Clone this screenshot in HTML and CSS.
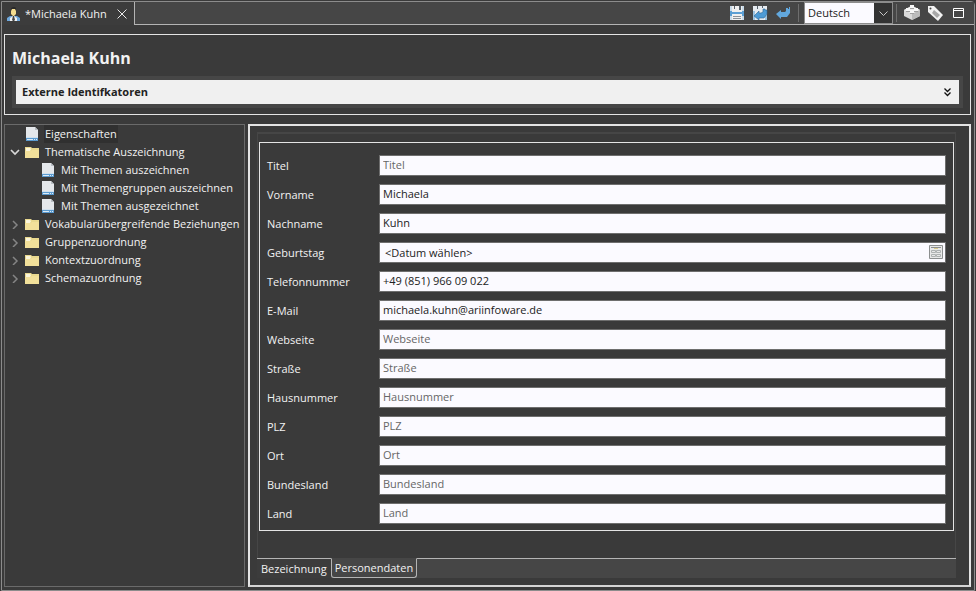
FILE: index.html
```html
<!DOCTYPE html>
<html lang="de">
<head>
    <meta charset="utf-8">
    <title>Michaela Kuhn</title>
    <link rel="stylesheet" href="styles.css">
</head>
<body>
    <!-- shared icons -->
    <svg class="sprite" aria-hidden="true">
        <symbol id="page" viewBox="0 0 14 16">
            <path d="M1 1h9l3 3v11H1z" fill="#e4e7ea"/>
            <path d="M10 1l3 3h-3z" fill="#b9bec3"/>
            <path d="M1 11h12v4H1z" fill="#5b9bd0"/>
            <path d="M1 11h12v1H1z" fill="#cfe0ee"/>
            <path d="M2 13h6v1H2zM9 13h1v1H9zM11 13h1v1h-1z" fill="#dcebf7"/>
        </symbol>
        <symbol id="folder" viewBox="0 0 14 12">
            <path d="M0 1h6l1 1h7v10H0z" fill="#e9d98f"/>
            <path d="M1 2h4l1 1-1 2H1z" fill="#fbf6dc"/>
            <path d="M7 4h7v8H0V5h6z" fill="#f2e09a"/>
        </symbol>
        <symbol id="open" viewBox="0 0 10 10">
            <path d="M1 3l4 4 4-4" fill="none" stroke="#d8d8d8" stroke-width="1.7"/>
        </symbol>
        <symbol id="closed" viewBox="0 0 10 10">
            <path d="M3 2l4 4-4 4" fill="none" stroke="#858585" stroke-width="1.5"/>
        </symbol>
    </svg>

    <div class="window">
        <header class="topbar">
            <div class="editor-tab">
                <svg class="person" viewBox="0 0 13 14" width="13" height="14">
                    <path d="M0 14v-3l3-2h7l3 2v3z" fill="#6fa8dc"/>
                    <path d="M3 11l3-2h1l3 2v3H3z" fill="#f3f3f3"/>
                    <path d="M6 9h1l1 4-1 1H6l-1-1z" fill="#444"/>
                    <path d="M4 2h5v5L7 9H6L4 7z" fill="#f4dc8f"/>
                    <path d="M4 4V1l2-1h2l1 1v3L8 2H5z" fill="#2a2a2a"/>
                </svg>
                <span>*Michaela Kuhn</span>
                <button class="close" aria-label="Schließen">
                    <svg viewBox="0 0 10 10" width="10" height="10"><path d="M.5.5l9 9M9.5.5l-9 9" stroke="#e8e8e8" fill="none"/></svg>
                </button>
            </div>
            <div class="toolbar">
                <button class="tool" aria-label="Speichern">
                    <svg viewBox="0 0 16 16" width="16" height="16">
                        <path d="M1 1h14v14H1z" fill="#5b9fd4"/>
                        <path d="M3 1h10v6H3zM3 9h10v6H3z" fill="#f0f0f0"/>
                        <path d="M5 1h1v3H5zM10 1h2v4h-2z" fill="#55606a"/>
                        <path d="M4 11h8v1H4zM4 13h8v1H4z" fill="#8b9299"/>
                        <path d="M1 1h2v5H1zM13 1h2v5h-2zM1 11h2v4H1zM13 11h2v4h-2z" fill="#c9dbe9"/>
                    </svg>
                </button>
                <button class="tool" aria-label="Speichern und zurück">
                    <svg viewBox="0 0 16 16" width="16" height="16">
                        <path d="M1 1h14v14H1z" fill="#e6ebf0"/>
                        <path d="M1 6h2v9H1zM13 10h2v5h-2z" fill="#9cc4e2"/>
                        <path d="M5 1h1v3H5zM10 1h1v2h-1z" fill="#55606a"/>
                        <path d="M2 11l5-5v2h2l2-1V4h2v1h2v4l-3 4H7v2z" fill="#4d9bd6" stroke="#2e6794" stroke-width=".6"/>
                    </svg>
                </button>
                <button class="tool" aria-label="Zurück">
                    <svg viewBox="0 0 16 16" width="16" height="16">
                        <path d="M1 9l5-4v2h4l1-1V3h2v1h1V2h1v6l-3 4H6v2z" fill="#62a8de"/>
                    </svg>
                </button>
                <span class="separator"></span>
                <div class="language">
                    <select aria-label="Sprache">
                        <option>Deutsch</option>
                        <option>Englisch</option>
                    </select>
                    <svg viewBox="0 0 9 6" width="9" height="6"><path d="M.5.5l4 4 4-4" fill="none" stroke="#c8c8c8"/></svg>
                </div>
                <span class="separator"></span>
                <button class="tool" aria-label="Baustein">
                    <svg viewBox="0 0 16 16" width="16" height="16">
                        <path d="M0 5l7-4h2l7 4v6l-8 4-8-4z" fill="#dadada"/>
                        <path d="M0 5l8 4 8-4-8-4z" fill="#ececec"/>
                        <path d="M8 9l8-4v6l-8 4z" fill="#bcbcbc"/>
                        <path d="M6 0h4v3H6zM2 3h4v3H2zM10 3h4v3h-4zM6 5h4v3H6z" fill="#f8f8f8"/>
                        <path d="M6 3h4v1H6zM2 6h4v1H2zM10 6h4v1h-4zM6 8h4v1H6z" fill="#a0a0a0"/>
                    </svg>
                </button>
                <button class="tool" aria-label="Etikett">
                    <svg viewBox="0 0 16 16" width="16" height="16">
                        <path d="M1 1h6l9 9-5 6L1 7z" fill="#f2f2f2"/>
                        <path d="M7 5l6 5-3 3-5-5z" fill="#a8a8a8"/>
                        <circle cx="3.5" cy="3.5" r="1" fill="#444"/>
                    </svg>
                </button>
                <button class="tool maximize" aria-label="Maximieren">
                    <svg viewBox="0 0 11 10" width="11" height="10"><path d="M.5.5h10v9H.5zM0 2.5h11" fill="none" stroke="#fff"/></svg>
                </button>
            </div>
        </header>

        <section class="heading">
            <h1>Michaela Kuhn</h1>
            <button class="identifiers">
                <span>Externe Identifkatoren</span>
                <svg viewBox="0 0 7 9" width="7" height="9"><path d="M.5.5l3 3 3-3M.5 4.500l3 3 3-3" fill="none" stroke="#111" stroke-width="1.300"/></svg>
            </button>
        </section>

        <main class="content">
            <nav class="tree">
                <ul>
                    <li><button><span class="arrow"></span><svg class="page"><use href="#page"/></svg><span class="selected">Eigenschaften</span></button></li>
                    <li>
                        <button><svg class="arrow"><use href="#open"/></svg><svg class="folder"><use href="#folder"/></svg><span>Thematische Auszeichnung</span></button>
                        <ul class="children">
                            <li><button><span class="arrow"></span><svg class="page"><use href="#page"/></svg><span>Mit Themen auszeichnen</span></button></li>
                            <li><button><span class="arrow"></span><svg class="page"><use href="#page"/></svg><span>Mit Themengruppen auszeichnen</span></button></li>
                            <li><button><span class="arrow"></span><svg class="page"><use href="#page"/></svg><span>Mit Themen ausgezeichnet</span></button></li>
                        </ul>
                    </li>
                    <li><button><svg class="arrow"><use href="#closed"/></svg><svg class="folder"><use href="#folder"/></svg><span>Vokabularübergreifende Beziehungen</span></button></li>
                    <li><button><svg class="arrow"><use href="#closed"/></svg><svg class="folder"><use href="#folder"/></svg><span>Gruppenzuordnung</span></button></li>
                    <li><button><svg class="arrow"><use href="#closed"/></svg><svg class="folder"><use href="#folder"/></svg><span>Kontextzuordnung</span></button></li>
                    <li><button><svg class="arrow"><use href="#closed"/></svg><svg class="folder"><use href="#folder"/></svg><span>Schemazuordnung</span></button></li>
                </ul>
            </nav>

            <section class="details">
                <div class="tab-panel">
                    <form class="person-form">
                        <label for="titel">Titel</label>
                        <input type="text" id="titel" placeholder="Titel">
                        <label for="vorname">Vorname</label>
                        <input type="text" id="vorname" placeholder="Vorname" value="Michaela">
                        <label for="nachname">Nachname</label>
                        <input type="text" id="nachname" placeholder="Nachname" value="Kuhn">
                        <label for="geburtstag">Geburtstag</label>
                        <div class="date-field">
                            <input type="text" id="geburtstag" value="&lt;Datum wählen&gt;">
                            <button type="button" aria-label="Kalender öffnen">
                                <svg viewBox="0 0 14 14" width="14" height="14">
                                    <path d="M.5.5h13v13H.5z" fill="#e8e8e8" stroke="#8c8f8f"/>
                                    <path d="M2 2.500h10" stroke="#8c8f8f"/>
                                    <path d="M5 3.500h4" stroke="#d8c98a"/>
                                    <path d="M2.500 5.500h4v2h-4zM7.500 5.500h4v2h-4zM2.500 9.500h4v2h-4zM7.500 9.500h4v2h-4z" fill="none" stroke="#adb1b1"/>
                                </svg>
                            </button>
                        </div>
                        <label for="telefon">Telefonnummer</label>
                        <input type="text" id="telefon" placeholder="Telefonnummer" value="+49 (851) 966 09 022">
                        <label for="email">E-Mail</label>
                        <input type="text" id="email" placeholder="E-Mail" value="michaela.kuhn@ariinfoware.de">
                        <label for="webseite">Webseite</label>
                        <input type="text" id="webseite" placeholder="Webseite">
                        <label for="strasse">Straße</label>
                        <input type="text" id="strasse" placeholder="Straße">
                        <label for="hausnummer">Hausnummer</label>
                        <input type="text" id="hausnummer" placeholder="Hausnummer">
                        <label for="plz">PLZ</label>
                        <input type="text" id="plz" placeholder="PLZ">
                        <label for="ort">Ort</label>
                        <input type="text" id="ort" placeholder="Ort">
                        <label for="bundesland">Bundesland</label>
                        <input type="text" id="bundesland" placeholder="Bundesland">
                        <label for="land">Land</label>
                        <input type="text" id="land" placeholder="Land">
                    </form>
                </div>
                <div class="bottom-tabs">
                    <button>Bezeichnung</button>
                    <button class="active">Personendaten</button>
                    <span class="rest"></span>
                </div>
            </section>
        </main>
    </div>
</body>
</html>
```

FILE: styles.css
```css
* {
    box-sizing: border-box;
}
body {
    margin: 0;
    background: #3a3a3a;
    color: #f2f2f2;
    font-family: "Open Sans", "Noto Sans", sans-serif;
    font-size: 11px;
    line-height: 18px;
}
button, input, select {
    font: inherit;
    color: inherit;
    margin: 0;
    border: none;
    border-radius: 0;
}
button {
    background: none;
    padding: 0;
    text-align: left;
}
svg {
    display: block;
    flex: none;
}
.sprite {
    position: absolute;
    width: 0;
    height: 0;
}
.window {
    display: flex;
    flex-direction: column;
    min-height: calc(100vh - 2px);
    margin: 1px;
    border: 1px solid #8c8c8c;
    border-top-right-radius: 4px;
}

/* top bar */
.topbar {
    display: flex;
    height: 23px;
    background: #464646;
}
.editor-tab {
    display: flex;
    align-items: center;
    gap: 5px;
    padding: 0 7px 0 5px;
    width: 133px;
    background: #3c3c3c;
    border-right: 1px solid #b4b4b4;
    white-space: nowrap;
}
.close {
    margin-left: auto;
}
.toolbar {
    display: flex;
    flex: 1;
    align-items: center;
    justify-content: flex-end;
    gap: 7px;
    padding-right: 10px;
    border-bottom: 1px solid #b4b4b4;
}
.separator {
    width: 1px;
    height: 18px;
    margin-right: -2px;
    background: #6e6e6e;
}
.language + .separator {
    margin: 0 0 0 -4px;
}
.language {
    position: relative;
    height: 22px;
}
.language select {
    appearance: none;
    width: 89px;
    height: 22px;
    padding: 0 20px 0 3px;
    border: 1px solid #8c8c8c;
    background: linear-gradient(to right, #fbfaff 69px, #333 69px);
    color: #222;
}
.language svg {
    position: absolute;
    right: 5px;
    top: 9px;
    pointer-events: none;
}
.maximize {
    margin-left: 3px;
}

/* heading */
.heading {
    margin: 9px 3px 0 2px;
    padding: 13px 7px 6px;
    border: 1px solid #e4e4e4;
}
h1 {
    margin: 0 0 7px;
    font-size: 16px;
    line-height: 21px;
}
.identifiers {
    display: flex;
    align-items: center;
    justify-content: space-between;
    width: 100%;
    height: 32px;
    padding: 0 8px 0 6px;
    border: 4px solid #464646;
    background: #f0f0f0;
    color: #222;
    font-weight: bold;
}

/* content */
.content {
    display: flex;
    flex: 1;
    gap: 3px;
    margin: 9px 3px 3px 2px;
}
.tree {
    width: 241px;
    border: 1px solid #6a6a6a;
    overflow: hidden;
}
.tree ul {
    margin: 0;
    padding: 0;
    list-style: none;
}
.tree .children {
    padding-left: 16px;
}
.tree button {
    display: flex;
    align-items: center;
    height: 18px;
    white-space: nowrap;
}
.arrow {
    width: 10px;
    height: 10px;
    margin: 0 5px;
}
.page, .folder {
    width: 14px;
    margin-right: 5px;
}
.page {
    height: 16px;
}
.folder {
    height: 12px;
}
.tree span:last-child {
    padding: 0 1px;
}
.selected {
    background: #303030;
}
.details {
    display: flex;
    flex: 1;
    flex-direction: column;
    padding: 6px 13px 7px 7px;
    border: 2px solid #e4e4e4;
    border-bottom-color: #d4d4d4;
}
.tab-panel {
    flex: 1;
    padding: 8px 1px 27px;
    border: 1px solid #464646;
    border-width: 2px 1px 0;
}
.person-form {
    display: grid;
    grid-template-columns: 104px 1fr;
    gap: 8px;
    align-items: center;
    padding: 12px 7px 6px;
    border: 1px solid #e4e4e4;
}
.person-form input {
    width: 100%;
    height: 21px;
    padding: 0 3px 3px;
    border: 1px solid #6e6e6e;
    background: #fbfaff;
    color: #222;
}
.person-form input::placeholder {
    color: #666;
    opacity: 1;
}
.date-field {
    position: relative;
    height: 21px;
}
.person-form .date-field input {
    padding: 0 22px 1px 5px;
}
.date-field button {
    position: absolute;
    right: 3px;
    top: 3px;
}
.bottom-tabs {
    display: flex;
    height: 20px;
    background: #464646;
}
.bottom-tabs button {
    padding: 0 4px;
    border-top: 1px solid #b4b4b4;
    background: #3c3c3c;
}
.bottom-tabs .active {
    padding: 0 3px;
    border: 1px solid #b4b4b4;
    border-top-color: #464646;
    border-radius: 0 0 3px 3px;
    background: #464646;
}
.rest {
    flex: 1;
    border-top: 1px solid #b4b4b4;
}
```
